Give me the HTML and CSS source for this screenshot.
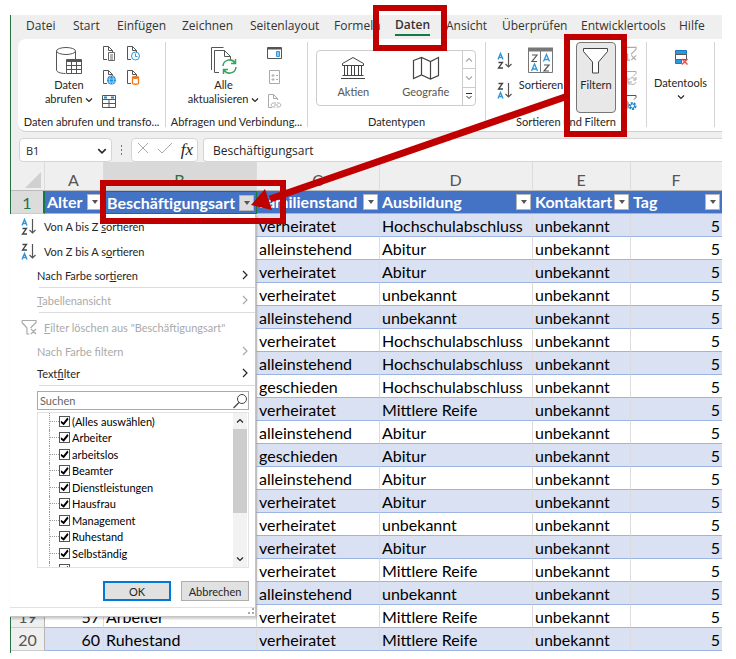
FILE: index.html
```html
<!DOCTYPE html>
<html lang="de">
<head>
    <meta charset="UTF-8">
    <meta name="viewport" content="width=device-width, initial-scale=1.0">
    <title>Excel - Daten filtern</title>
    <link rel="stylesheet" href="styles.css">
</head>
<body>
    <!-- Wiederverwendete Symbole -->
    <svg class="defs" aria-hidden="true">
        <symbol id="down" viewBox="0 0 8 6"><path d="M1 1.500l3 3 3-3" fill="none" stroke="currentColor" stroke-width="1.2"/></symbol>
        <symbol id="right" viewBox="0 0 6 10"><path d="M1 1l4 4-4 4" fill="none" stroke="currentColor" stroke-width="1.2"/></symbol>
        <symbol id="page" viewBox="0 0 15 15"><path d="M5 13.500H1.500V.5h5l4 4V6M6.500.5v4h4" fill="none" stroke="currentColor"/></symbol>
        <symbol id="az" viewBox="0 0 16 18">
            <path d="M1 7.500L3.500 1.500 6 7.500M2 5.500h3" fill="none" stroke="#2f97dc" stroke-width="1.4"/>
            <path d="M1.500 10.500h4l-4 5.500h4.500" fill="none" stroke="#444" stroke-width="1.3"/>
            <path d="M11.500 1v14M8.500 12l3 3 3-3" fill="none" stroke="#555" stroke-width="1.2"/>
        </symbol>
        <symbol id="za" viewBox="0 0 16 18">
            <path d="M1.500 1.500h4l-4 5.500h4.500" fill="none" stroke="#444" stroke-width="1.3"/>
            <path d="M1 16.500l2.500-6 2.500 6M2 14.500h3" fill="none" stroke="#2f97dc" stroke-width="1.4"/>
            <path d="M11.500 1v14M8.500 12l3 3 3-3" fill="none" stroke="#555" stroke-width="1.2"/>
        </symbol>
        <symbol id="clear" viewBox="0 0 16 16"><path d="M1 1.500h14v2L9.500 9M1 3.500l5 5.500v6h2.500M1 1.500v2M10 10l5 5M15 10l-5 5" fill="none" stroke="#aaa" stroke-width="1.200"/></symbol>
    </svg>

    <main class="app">
        <nav class="tabs">
            <button>Datei</button>
            <button>Start</button>
            <button>Einfügen</button>
            <button>Zeichnen</button>
            <button>Seitenlayout</button>
            <button>Formeln</button>
            <button class="active"><span>Daten</span></button>
            <button>Ansicht</button>
            <button>Überprüfen</button>
            <button>Entwicklertools</button>
            <button>Hilfe</button>
        </nav>

        <section class="ribbon">
            <div class="group group-get">
                <div class="tools">
                    <button class="big">
                        <svg width="28" height="30" viewBox="0 0 28 30" fill="none" stroke="#555">
                            <path d="M1.500 5v19c0 2 4 3.500 9 3.500M20.500 5v8" />
                            <ellipse cx="11" cy="5" rx="9.500" ry="3.500" fill="#fff"/>
                            <path d="M11.500 13.500h15v14h-15z" fill="#fff"/>
                            <path d="M12 14.500h14" stroke-width="3"/>
                            <path d="M11.500 19.500h15M11.500 23.500h15M16.500 14v13.500M21.500 14v13.500"/>
                        </svg>
                        <span>Daten</span>
                        <span>abrufen <svg class="chev"><use href="#down"/></svg></span>
                    </button>
                    <div class="small-grid">
                        <button aria-label="Aus Text/CSV"><svg width="15" height="15" viewBox="0 0 15 15"><use href="#page"/><path d="M6.500 6.500h6v8h-6zM8 9h3M8 11h3M8 13h3" fill="#fff" stroke="#666"/></svg></button>
                        <button aria-label="Zuletzt verwendete Quellen"><svg width="15" height="15" viewBox="0 0 15 15"><use href="#page"/><circle cx="9.500" cy="10" r="4" fill="#fff" stroke="#2f97dc"/><path d="M9.500 7.500V10.500h2" fill="none" stroke="#2f97dc"/></svg></button>
                        <button aria-label="Aus dem Web"><svg width="15" height="15" viewBox="0 0 15 15"><use href="#page"/><circle cx="9.500" cy="10" r="4.500" fill="#1e88d2"/><path d="M5 9h9M5 12h9" stroke="#9bd0f5"/><ellipse cx="9.500" cy="10" rx="2" ry="4.500" fill="none" stroke="#9bd0f5"/></svg></button>
                        <button aria-label="Vorhandene Verbindungen"><svg width="15" height="15" viewBox="0 0 15 15"><use href="#page"/><path d="M6.500 7.500v6c0 1 6 1 6 0v-6c0-1-6-1-6 0c0 1 6 1 6 0" fill="#fff" stroke="#e8781e" stroke-width="1.300"/></svg></button>
                        <button aria-label="Aus Tabelle/Bereich"><svg width="15" height="15" viewBox="0 0 15 15" fill="none"><path d="M.5 1.500h13v12H.5zM.5 5.500h13M.5 9.500h13M7 5.500v8" stroke="#555"/><path d="M2 3.500h3M9 3.500h3" stroke="#1e88d2" stroke-width="2"/></svg></button>
                    </div>
                </div>
                <p>Daten abrufen und transfo...</p>
            </div>

            <div class="group group-query">
                <div class="tools">
                    <button class="big">
                        <svg width="28" height="30" viewBox="0 0 28 30" fill="none" stroke="#555">
                            <path d="M1.500 24V1.500h12M9 26.500H4.500v-22h10l6 6v3M14.500 4.500v6h6"/>
                            <path d="M13 20a6.500 6.500 0 0 1 12-3M26 21a6.500 6.500 0 0 1-12 3M25.500 13v4.500H21M13.500 28v-4.500H18" stroke="#36a45a" stroke-width="1.500"/>
                        </svg>
                        <span>Alle</span>
                        <span>aktualisieren <svg class="chev"><use href="#down"/></svg></span>
                    </button>
                    <div class="small-grid">
                        <button aria-label="Abfragen und Verbindungen"><svg width="15" height="15" viewBox="0 0 15 15"><path d="M.5 1.500h14v11H.5z" fill="#fff" stroke="#555"/><path d="M1 2.500h13" stroke="#555" stroke-width="2"/><path d="M9.500 5.500h3v5h-3z" fill="#8bc6f0" stroke="#2f97dc"/></svg></button>
                        <button aria-label="Eigenschaften"><svg width="15" height="15" viewBox="0 0 15 15"><path d="M2.500.5h10v13h-10zM5 5h2v1H5zM5 9h2v1H5zM9 5.500h2M9 9.500h2" fill="#fff" stroke="#aaa"/></svg></button>
                        <button class="off" aria-label="Verknüpfungen bearbeiten"><svg width="15" height="15" viewBox="0 0 15 15"><use href="#page"/><path d="M9 9H6.500c-3 0-3 4 0 4H8M9.500 13h2c3 0 3-4 0-4H10M7 11h4" fill="none" stroke="#aaa"/></svg></button>
                    </div>
                </div>
                <p>Abfragen und Verbindung...</p>
            </div>

            <div class="group group-types">
                <div class="tools">
                    <div class="gallery">
                        <button class="type">
                            <svg width="26" height="24" viewBox="0 0 26 24" fill="none" stroke="#444"><path d="M2.500 7.500L13 1.500l10.500 6v2h-21zM4.500 9.500v10M7.500 9.500v10M11.500 9.500v10M14.500 9.500v10M18.500 9.500v10M21.500 9.500v10M2.500 19.500h21M1 22.500h24"/></svg>
                            <span>Aktien</span>
                        </button>
                        <button class="type">
                            <svg width="28" height="24" viewBox="0 0 28 24" fill="none" stroke="#444" stroke-width="1.200"><path d="M1.500 4.500l8-3 9 4 8-4v18l-8 3.500-9-4-8 3.500zM9.500 1.500V19M18.500 5.500V23"/></svg>
                            <span>Geografie</span>
                        </button>
                        <div class="steps">
                            <button class="up" aria-label="Nach oben"><svg class="chev"><use href="#down"/></svg></button>
                            <button aria-label="Nach unten"><svg class="chev"><use href="#down"/></svg></button>
                            <button class="more" aria-label="Mehr"><svg width="8" height="8" viewBox="0 0 8 8"><path d="M1 1.500h6M1.500 4L4 6.500 6.500 4" fill="none" stroke="#333"/></svg></button>
                        </div>
                    </div>
                </div>
                <p>Datentypen</p>
            </div>

            <div class="group group-sort">
                <div class="tools">
                    <div class="sort-pair">
                        <button aria-label="Von A bis Z sortieren"><svg width="16" height="18"><use href="#az"/></svg></button>
                        <button aria-label="Von Z bis A sortieren"><svg width="16" height="18"><use href="#za"/></svg></button>
                    </div>
                    <button class="big">
                        <svg width="28" height="30" viewBox="0 0 28 30" fill="none">
                            <path d="M1.500 2.500h24v24h-24z" stroke="#777"/><path d="M1 3.500h25" stroke="#777" stroke-width="4"/><path d="M13.500 5v21" stroke="#777"/>
                            <path d="M5 9h5l-5 6.500h5M17 19h5l-5 6h5" stroke="#555" stroke-width="1.200"/>
                            <path d="M4.500 25L7.500 18l3 7M5.500 23h4M16.500 15.500l3-7 3 7M17.500 13.500h4" stroke="#2f97dc" stroke-width="1.300"/>
                        </svg>
                        <span>Sortieren</span>
                    </button>
                    <button class="big filter">
                        <svg width="28" height="30" viewBox="0 0 28 30"><path d="M1.500 2.500h24v3L16.500 16v11h-6V16L1.500 5.500z" fill="#fff" stroke="#444"/></svg>
                        <span>Filtern</span>
                    </button>
                    <div class="small-grid">
                        <button aria-label="Löschen"><svg width="15" height="15"><use href="#clear"/></svg></button>
                        <button aria-label="Erneut anwenden"><svg width="15" height="15" viewBox="0 0 15 15" fill="none" stroke="#aaa"><path d="M1 1.500h13v2l-3 3M1 1.500v2l5 5v5M7 10c1-3 5-3 6.500-.5M14 7v3h-3M14 12c-1 3-5 3-6.500 1M7 15v-3h3"/></svg></button>
                        <button aria-label="Erweitert"><svg width="15" height="17" viewBox="0 0 15 17" fill="none"><path d="M1 1.500h13v2l-2 2M1 1.500v2l5 5v6" stroke="#555"/><circle cx="10.500" cy="12" r="3" stroke="#1e88d2" stroke-width="2" stroke-dasharray="2 1"/><circle cx="10.500" cy="12" r="2" stroke="#1e88d2"/></svg></button>
                    </div>
                </div>
                <p>Sortieren und Filtern</p>
            </div>

            <div class="group group-tools">
                <div class="tools">
                    <button class="big">
                        <svg width="28" height="28" viewBox="0 0 28 28"><path d="M8.500 4.500h11v4h-11z" fill="#2f97dc" stroke="#1e78c0"/><path d="M8.500 8.500h11v5h-11z" fill="#fff" stroke="#555"/><path d="M8.500 13.500h6v4h-6z" fill="#2f97dc" stroke="#1e78c0"/><path d="M15 13l5.500 5.500M20.500 13L15 18.500" stroke="#e8453c" stroke-width="1.300"/></svg>
                        <span>Datentools</span>
                        <svg class="chev"><use href="#down"/></svg>
                    </button>
                </div>
            </div>
        </section>

        <section class="formula-bar">
            <div class="name-box">
                <input type="text" value="B1" aria-label="Namenfeld">
                <button aria-label="Namenliste öffnen"><svg width="10" height="8"><use href="#down"/></svg></button>
            </div>
            <span class="dots"></span>
            <div class="fx">
                <button aria-label="Abbrechen"><svg width="14" height="14" viewBox="0 0 14 14"><path d="M2 2l10 10M12 2L2 12" stroke="#aaa"/></svg></button>
                <button aria-label="Eingeben"><svg width="16" height="14" viewBox="0 0 16 14"><path d="M1 8l4 4L15 2" fill="none" stroke="#aaa"/></svg></button>
                <button aria-label="Funktion einfügen"><i>fx</i></button>
            </div>
            <input class="formula" type="text" value="Beschäftigungsart" aria-label="Bearbeitungsleiste">
        </section>

        <div class="sheet">
            <table>
                <colgroup>
                    <col class="c-num"><col class="c-a"><col class="c-b"><col class="c-c"><col class="c-b"><col class="c-e"><col>
                </colgroup>
                <thead>
                    <tr class="letters">
                        <th><span class="corner"></span></th>
                        <th>A</th>
                        <th class="selected">B</th>
                        <th>C</th>
                        <th>D</th>
                        <th>E</th>
                        <th class="last">F</th>
                    </tr>
                    <tr class="titles">
                        <th class="num">1</th>
                        <th><div>Alter<button aria-label="Filter Alter"></button></div></th>
                        <th class="cell-active"><div>Beschäftigungsart<button class="on" aria-label="Filter Beschäftigungsart"></button></div></th>
                        <th><div>Familienstand<button aria-label="Filter Familienstand"></button></div></th>
                        <th><div>Ausbildung<button aria-label="Filter Ausbildung"></button></div></th>
                        <th><div>Kontaktart<button aria-label="Filter Kontaktart"></button></div></th>
                        <th><div>Tag<button aria-label="Filter Tag"></button></div></th>
                    </tr>
                </thead>
                <tbody>
                    <tr><th>2</th><td></td><td></td><td>verheiratet</td><td>Hochschulabschluss</td><td>unbekannt</td><td>5</td></tr>
                    <tr><th>3</th><td></td><td></td><td>alleinstehend</td><td>Abitur</td><td>unbekannt</td><td>5</td></tr>
                    <tr><th>4</th><td></td><td></td><td>verheiratet</td><td>Abitur</td><td>unbekannt</td><td>5</td></tr>
                    <tr><th>5</th><td></td><td></td><td>verheiratet</td><td>unbekannt</td><td>unbekannt</td><td>5</td></tr>
                    <tr><th>6</th><td></td><td></td><td>alleinstehend</td><td>unbekannt</td><td>unbekannt</td><td>5</td></tr>
                    <tr><th>7</th><td></td><td></td><td>verheiratet</td><td>Hochschulabschluss</td><td>unbekannt</td><td>5</td></tr>
                    <tr><th>8</th><td></td><td></td><td>alleinstehend</td><td>Hochschulabschluss</td><td>unbekannt</td><td>5</td></tr>
                    <tr><th>9</th><td></td><td></td><td>geschieden</td><td>Hochschulabschluss</td><td>unbekannt</td><td>5</td></tr>
                    <tr><th>10</th><td></td><td></td><td>verheiratet</td><td>Mittlere Reife</td><td>unbekannt</td><td>5</td></tr>
                    <tr><th>11</th><td></td><td></td><td>alleinstehend</td><td>Abitur</td><td>unbekannt</td><td>5</td></tr>
                    <tr><th>12</th><td></td><td></td><td>geschieden</td><td>Abitur</td><td>unbekannt</td><td>5</td></tr>
                    <tr><th>13</th><td></td><td></td><td>alleinstehend</td><td>Abitur</td><td>unbekannt</td><td>5</td></tr>
                    <tr><th>14</th><td></td><td></td><td>verheiratet</td><td>Abitur</td><td>unbekannt</td><td>5</td></tr>
                    <tr><th>15</th><td></td><td></td><td>verheiratet</td><td>unbekannt</td><td>unbekannt</td><td>5</td></tr>
                    <tr><th>16</th><td></td><td></td><td>verheiratet</td><td>Abitur</td><td>unbekannt</td><td>5</td></tr>
                    <tr><th>17</th><td></td><td></td><td>verheiratet</td><td>Mittlere Reife</td><td>unbekannt</td><td>5</td></tr>
                    <tr><th>18</th><td></td><td></td><td>alleinstehend</td><td>unbekannt</td><td>unbekannt</td><td>5</td></tr>
                    <tr><th>19</th><td>57</td><td>Arbeiter</td><td>verheiratet</td><td>Mittlere Reife</td><td>unbekannt</td><td>5</td></tr>
                    <tr><th>20</th><td>60</td><td>Ruhestand</td><td>verheiratet</td><td>Mittlere Reife</td><td>unbekannt</td><td>5</td></tr>
                </tbody>
            </table>

            <!-- Filtermenü der Spalte B -->
            <form class="menu">
                <button type="button" class="item icon-item"><svg width="16" height="18"><use href="#az"/></svg><span>Von A bis Z <u>s</u>ortieren</span></button>
                <button type="button" class="item icon-item"><svg width="16" height="18"><use href="#za"/></svg><span>Von Z bis A s<u>o</u>rtieren</span></button>
                <button type="button" class="item"><span>Nach Farbe sor<u>t</u>ieren</span><svg class="arrow"><use href="#right"/></svg></button>
                <hr>
                <button type="button" class="item" disabled><span><u>T</u>abellenansicht</span><svg class="arrow"><use href="#right"/></svg></button>
                <hr>
                <button type="button" class="item icon-item tall" disabled><svg width="16" height="16"><use href="#clear"/></svg><span><u>F</u>ilter löschen aus "Beschäftigungsart"</span></button>
                <button type="button" class="item" disabled><span>Nach Farbe f<u>i</u>ltern</span><svg class="arrow"><use href="#right"/></svg></button>
                <button type="button" class="item"><span>Text<u>f</u>ilter</span><svg class="arrow"><use href="#right"/></svg></button>
                <hr>
                <div class="search">
                    <input type="text" placeholder="Suchen" aria-label="Suchen">
                    <svg width="16" height="16" viewBox="0 0 16 16" fill="none" stroke="#444"><circle cx="10" cy="6" r="4.500"/><path d="M7 9.500L1.500 15" stroke-width="1.300"/></svg>
                </div>
                <div class="values">
                    <ul>
                        <li><label><input type="checkbox" checked>(Alles auswählen)</label></li>
                        <li><label><input type="checkbox" checked>Arbeiter</label></li>
                        <li><label><input type="checkbox" checked>arbeitslos</label></li>
                        <li><label><input type="checkbox" checked>Beamter</label></li>
                        <li><label><input type="checkbox" checked>Dienstleistungen</label></li>
                        <li><label><input type="checkbox" checked>Hausfrau</label></li>
                        <li><label><input type="checkbox" checked>Management</label></li>
                        <li><label><input type="checkbox" checked>Ruhestand</label></li>
                        <li><label><input type="checkbox" checked>Selbständig</label></li>
                        <li><input type="checkbox" checked aria-label="Weiterer Wert"></li>
                    </ul>
                    <div class="scrollbar">
                        <svg class="chev flip"><use href="#down"/></svg>
                        <span class="thumb"></span>
                        <svg class="chev"><use href="#down"/></svg>
                    </div>
                </div>
                <div class="actions">
                    <button type="button" class="ok">OK</button>
                    <button type="button">Abbrechen</button>
                </div>
                <div class="grip"><svg width="8" height="8" viewBox="0 0 8 8" fill="#aaa"><path d="M5 0h2v2H5zM5 4h2v2H5zM1 4h2v2H1z"/></svg></div>
            </form>
        </div>

        <!-- Rote Markierungen mit Pfeil -->
        <svg class="marks" aria-hidden="true" fill="none" stroke="#c00000" stroke-width="6">
            <path d="M366 -7h68v40h-68zM557 22h57v97h-57zM93 168h180v38H93z"/>
            <path d="M555 82L260 184" stroke-width="7"/>
            <path d="M241 190l14-16 7 21z" fill="#c00000" stroke="none"/>
        </svg>
    </main>
</body>
</html>
```

FILE: styles.css
```css
* {
    box-sizing: border-box;
}
body {
    margin: 0;
    padding: 15px 14px 6px 10px;
    background: #fff;
    font-family: Lato, "Open Sans", sans-serif;
    font-size: 11px;
    color: #262626;
}
button, input {
    font: inherit;
    color: inherit;
    border: 0;
    padding: 0;
    margin: 0;
    background: none;
}
.defs {
    display: none;
}
.app {
    position: relative;
    border-left: 1px solid #217346;
    background: #efefef;
}

/* Registerkarten */
.tabs {
    display: grid;
    grid-template-columns: 47px 44px 65px 68px 84px 61px 51px 56px 79px 98px 1fr;
    height: 24px;
    padding: 0 0 3px 15px;
    font-family: "Open Sans", "Noto Sans", sans-serif;
    overflow: hidden;
}
.tabs button {
    text-align: left;
    white-space: nowrap;
    color: #333;
    font-size: 12px;
}
.tabs .active {
    font-weight: 600;
}
.tabs .active span {
    display: inline-block;
    line-height: 18px;
    border-bottom: 2px solid #107c41;
}

/* Menüband */
.ribbon {
    display: flex;
    height: 93px;
    margin-left: 7px;
    padding-top: 3px;
    overflow: hidden;
    background: #fff;
    border-radius: 8px 0 0 8px;
    border-bottom: 1px solid #cfcfcf;
}
.group {
    display: flex;
    flex-direction: column;
    flex: none;
    margin-bottom: 4px;
    border-right: 1px solid #d5d5d5;
}
.group-get { width: 148px; }
.group-query { width: 142px; }
.group-types { width: 178px; }
.group-sort { width: 161px; }
.group-tools { width: 68px; }
.group p {
    margin: 0;
    line-height: 16px;
    text-align: center;
    white-space: nowrap;
}
.tools {
    display: flex;
    flex: none;
    height: 72px;
}
.big {
    display: flex;
    flex-direction: column;
    align-items: center;
    padding-top: 4px;
    line-height: 14px;
}
.big > svg {
    margin-bottom: 2px;
}
.big span {
    white-space: nowrap;
}
.chev {
    width: 8px;
    height: 6px;
}
.group-get .big { width: 84px; padding-left: 18px; }
.group-query .big { width: 101px; padding-left: 14px; }
.group-tools .big { width: 68px; }
.group-tools .chev { margin-top: 4px; }
.small-grid {
    display: grid;
    grid-template-columns: 24px 24px;
    grid-auto-rows: 24px;
    padding-top: 4px;
}
.small-grid button {
    text-align: left;
    line-height: 0;
    color: #555;
    align-self: start;
}
.small-grid .off {
    color: #aaa;
}
.group-query .small-grid,
.group-sort .small-grid {
    grid-template-columns: 24px;
}
.gallery {
    display: flex;
    width: 160px;
    height: 56px;
    margin: 8px 0 0 8px;
    border: 1px solid #ccc;
    border-radius: 4px;
}
.type {
    display: flex;
    flex: 1;
    flex-direction: column;
    align-items: center;
    justify-content: center;
    gap: 4px;
    line-height: 16px;
    color: #555;
}
.steps {
    display: flex;
    flex-direction: column;
    width: 13px;
    border-left: 1px solid #ccc;
    color: #aaa;
}
.steps button {
    flex: 1;
    line-height: 0;
}
.steps button + button {
    border-top: 1px solid #ccc;
}
.up svg, .flip {
    transform: rotate(180deg);
}
.sort-pair {
    display: flex;
    flex-direction: column;
    gap: 12px;
    width: 30px;
    padding: 10px 0 0 8px;
}
.sort-pair button {
    line-height: 0;
}
.group-sort .big {
    width: 50px;
}
.group-sort .filter {
    width: 40px;
    height: 71px;
    margin: 0 6px 0 10px;
    padding-top: 3px;
    background: #e8e8e8;
    border: 1px solid #777;
    border-radius: 4px;
}

/* Bearbeitungsleiste */
.formula-bar {
    display: flex;
    height: 30px;
    padding: 6px 0 0 8px;
    font-family: "Open Sans", "Noto Sans", sans-serif;
    font-size: 12px;
}
.name-box, .fx, .formula {
    height: 24px;
    background: #fff;
    border: 1px solid #d5d5d5;
    border-radius: 4px;
}
.name-box {
    display: flex;
    width: 93px;
    padding: 0 4px 0 6px;
}
.name-box input {
    flex: 1;
    min-width: 0;
    font-size: 11px;
}
.dots {
    width: 19px;
    margin: 7px 0;
    background: radial-gradient(circle, #777 1px, transparent 1px) center / 19px 4px;
}
.fx {
    display: flex;
    justify-content: space-between;
    align-items: center;
    width: 67px;
    padding: 0 4px;
    margin-right: 5px;
}
.fx button {
    line-height: 16px;
}
.fx i {
    font: italic 17px "Liberation Serif", serif;
}
.formula {
    flex: 1;
    min-width: 0;
    padding-left: 9px;
    border-right: 0;
    border-radius: 4px 0 0 4px;
}

/* Tabellenblatt */
.sheet {
    position: relative;
    padding-bottom: 2px;
    background: #fff;
}
table {
    width: 100%;
    table-layout: fixed;
    border-spacing: 0;
    font-size: 16px;
    line-height: 20px;
    color: #000;
}
.c-num { width: 34px; }
.c-a { width: 59px; }
.c-b { width: 153px; }
.c-c { width: 123px; }
.c-e { width: 98px; }
th, td {
    height: 23px;
    padding: 2px 3px 0 2px;
    text-align: left;
    white-space: nowrap;
    border-right: 1px solid #dcdcdc;
    border-bottom: 1px solid #9bb4e2;
}
td:last-child {
    text-align: right;
    padding-right: 2px;
    border-right: 0;
}
td:nth-child(2) {
    text-align: right;
}
.letters th {
    height: 29px;
    padding-top: 8px;
    text-align: center;
    font-weight: 400;
    color: #555;
    background: #efefef;
    border-bottom-color: #bbb;
}
.letters .selected {
    background: #d9d9d9;
    color: #217346;
}
.letters .last {
    border-right: 0;
}
.corner {
    display: block;
    width: 16px;
    height: 16px;
    margin-left: 12px;
    background: #d0d0d0;
    clip-path: polygon(100% 0, 100% 100%, 0 100%);
}
.titles th {
    padding: 0 2px;
    background: #4472c4;
    color: #fff;
    border-right: 0;
}
.titles div {
    display: flex;
    justify-content: space-between;
    align-items: center;
    height: 22px;
    overflow: hidden;
}
.titles button {
    flex: none;
    display: flex;
    align-items: center;
    justify-content: center;
    width: 15px;
    height: 16px;
    background: #fff;
    border: 1px solid #b5b5b5;
}
.titles button::after {
    content: "";
    border: 3px solid transparent;
    border-top: 4px solid #555;
    border-bottom: 0;
}
.titles .on {
    background: #ddd;
}
.titles .cell-active {
    border: 1px solid #107c41;
}
.titles .cell-active div {
    height: 21px;
}
.titles .num, tbody th {
    padding: 2px 0 0;
    text-align: center;
    font-weight: 400;
    color: #555;
    background: #efefef;
    border-right: 1px solid #b5b5b5;
    border-bottom-color: #ccc;
}
.titles .num {
    background: #dcdcdc;
    color: #217346;
    border-right: 2px solid #107c41;
}
tbody tr:nth-child(odd) td {
    background: #d9e1f2;
}

/* Filtermenü */
.menu {
    position: absolute;
    left: -1px;
    top: 52px;
    width: 246px;
    background: #fff;
    border-right: 1px solid #c5c5c5;
    border-bottom: 1px solid #c5c5c5;
    box-shadow: 1px 2px 2px #0003;
}
.item {
    display: flex;
    align-items: center;
    justify-content: space-between;
    width: 100%;
    height: 22px;
    padding: 0 7px 0 27px;
    text-align: left;
    white-space: pre;
}
.icon-item {
    justify-content: flex-start;
    gap: 7px;
    height: 25px;
    padding-left: 11px;
}
.tall {
    height: 26px;
}
.item:disabled {
    color: #aaa;
}
.arrow {
    width: 6px;
    height: 10px;
}
.menu hr {
    height: 1px;
    margin: 1px 0 1px 29px;
    border: 0;
    background: #dcdcdc;
}
.search {
    display: flex;
    align-items: center;
    height: 19px;
    margin: 5px 6px 2px 27px;
    border: 1px solid #aaa;
}
.search input {
    flex: 1;
    min-width: 0;
    padding-left: 2px;
}
.search input::placeholder {
    color: #666;
    opacity: 1;
}
.values {
    display: flex;
    height: 156px;
    margin: 0 6px 0 27px;
    overflow: hidden;
    border: 1px solid #e2e2e2;
}
.values ul {
    display: grid;
    grid-auto-rows: 1fr;
    flex: 1;
    height: 165px;
    margin: 0;
    padding: 0 0 0 11px;
    list-style: none;
    color: #000;
}
.values li {
    display: flex;
    align-items: center;
    border-left: 1px dotted #999;
}
.values li::before {
    content: "";
    width: 9px;
    border-top: 1px dotted #999;
}
.values label {
    display: flex;
    align-items: center;
    gap: 2px;
}
.values input {
    appearance: none;
    width: 11px;
    height: 11px;
    border: 1px solid #555;
    background: #fff;
}
.values input:checked::after {
    content: "";
    display: block;
    width: 9px;
    height: 9px;
    background: #000;
    clip-path: polygon(10% 45%, 38% 65%, 82% 8%, 95% 28%, 42% 95%, 10% 70%);
}
.scrollbar {
    display: flex;
    flex-direction: column;
    align-items: center;
    width: 14px;
    margin-right: 1px;
    padding: 5px 0;
    background: #f2f2f2;
}
.thumb {
    width: 14px;
    height: 84px;
    margin: 5px 0 auto;
    background: #cdcdcd;
}
.actions {
    display: flex;
    justify-content: flex-end;
    gap: 10px;
    padding: 13px 6px 6px 0;
}
.actions button {
    width: 68px;
    height: 20px;
    background: #e1e1e1;
    border: 1px solid #adadad;
}
.actions .ok {
    border: 2px solid #0078d7;
}
.grip {
    display: flex;
    justify-content: flex-end;
    height: 9px;
    border-top: 1px solid #e2e2e2;
}

.marks {
    position: absolute;
    left: -1px;
    top: 0;
    width: 100%;
    height: 100%;
    overflow: visible;
    pointer-events: none;
}
```
